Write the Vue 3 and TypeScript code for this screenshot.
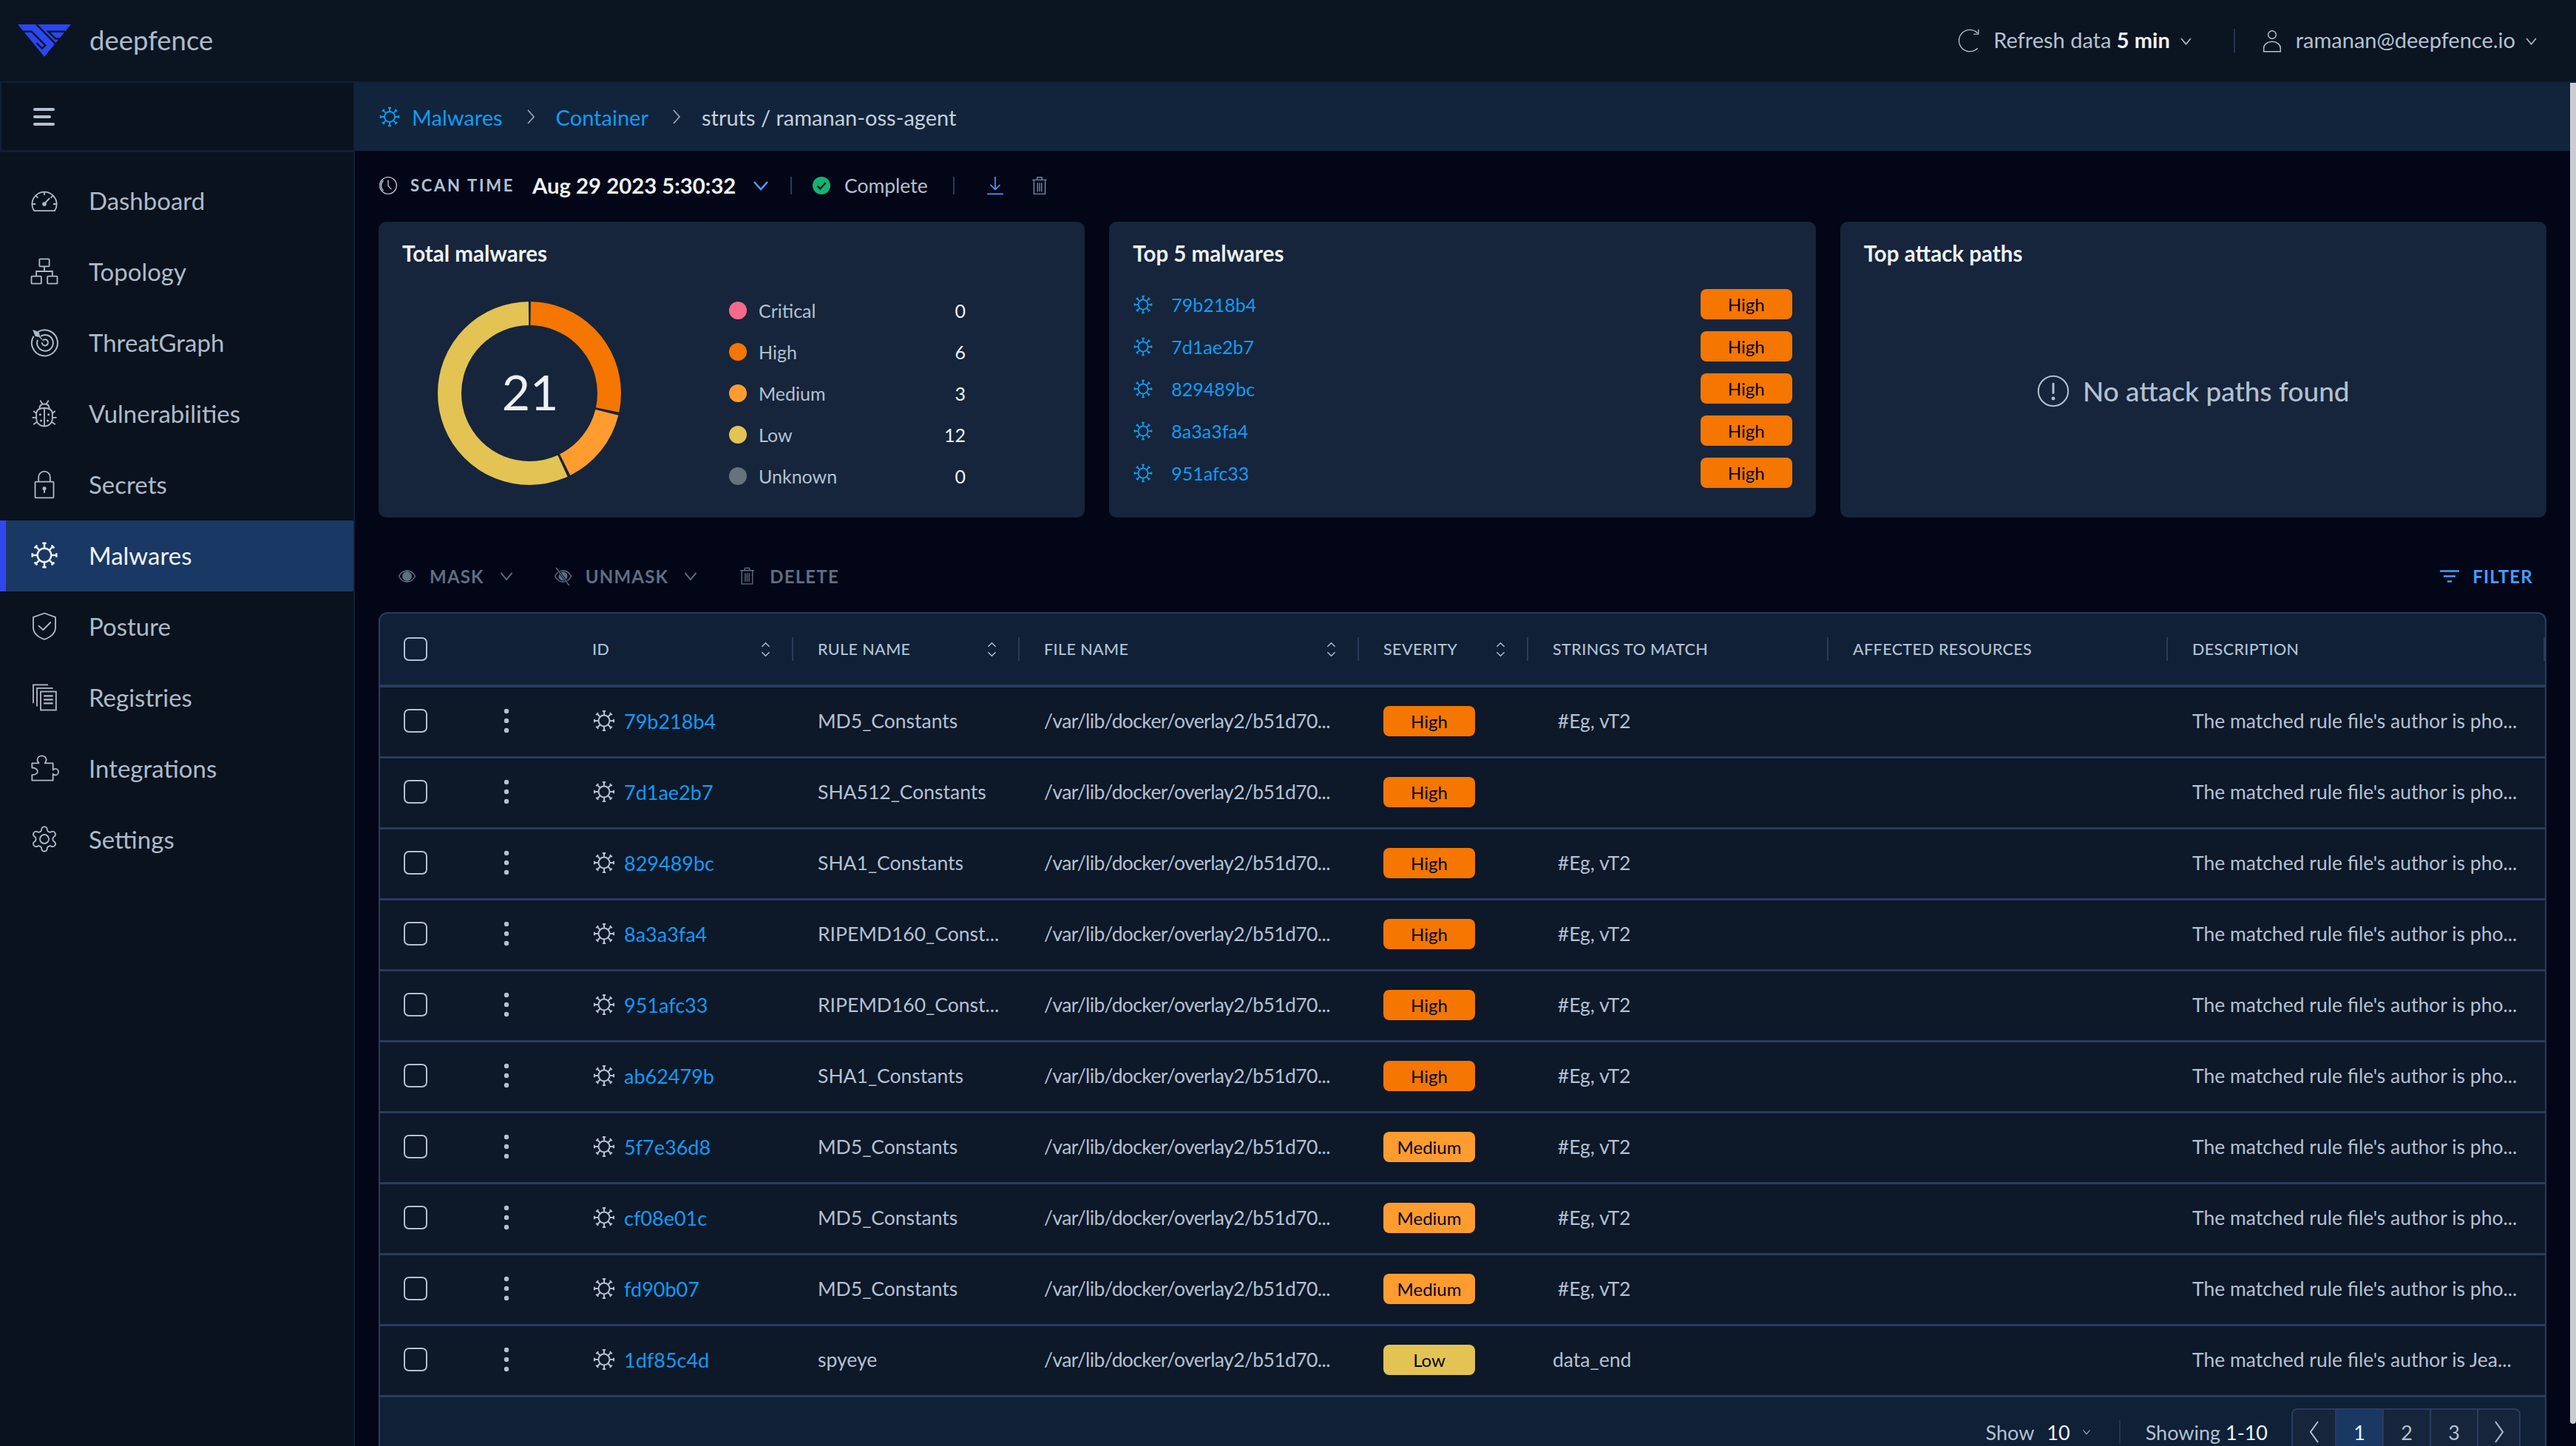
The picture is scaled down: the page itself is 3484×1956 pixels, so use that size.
<script setup lang="ts">
import { computed } from "vue";

type Severity = "Critical" | "High" | "Medium" | "Low" | "Unknown";

interface Row {
  id: string;
  rule: string;
  severity: Severity;
  strings: string;
  desc: string;
}

const navItems = [
  { label: "Dashboard", icon: "i-gauge" },
  { label: "Topology", icon: "i-topo" },
  { label: "ThreatGraph", icon: "i-target" },
  { label: "Vulnerabilities", icon: "i-bug" },
  { label: "Secrets", icon: "i-lock" },
  { label: "Malwares", icon: "i-virus" },
  { label: "Posture", icon: "i-shield" },
  { label: "Registries", icon: "i-docs" },
  { label: "Integrations", icon: "i-puzzle" },
  { label: "Settings", icon: "i-gear" },
];

const legend: { name: Severity; value: number; color: string }[] = [
  { name: "Critical", value: 0, color: "#f56a8a" },
  { name: "High", value: 6, color: "#f57600" },
  { name: "Medium", value: 3, color: "#ff9c30" },
  { name: "Low", value: 12, color: "#e3c353" },
  { name: "Unknown", value: 0, color: "#66737f" },
];

const top5 = ["79b218b4", "7d1ae2b7", "829489bc", "8a3a3fa4", "951afc33"];

const pho = "The matched rule file's author is pho...";
const rows: Row[] = [
  { id: "79b218b4", rule: "MD5_Constants", severity: "High", strings: " #Eg, vT2", desc: pho },
  { id: "7d1ae2b7", rule: "SHA512_Constants", severity: "High", strings: "", desc: pho },
  { id: "829489bc", rule: "SHA1_Constants", severity: "High", strings: " #Eg, vT2", desc: pho },
  { id: "8a3a3fa4", rule: "RIPEMD160_Const...", severity: "High", strings: " #Eg, vT2", desc: pho },
  { id: "951afc33", rule: "RIPEMD160_Const...", severity: "High", strings: " #Eg, vT2", desc: pho },
  { id: "ab62479b", rule: "SHA1_Constants", severity: "High", strings: " #Eg, vT2", desc: pho },
  { id: "5f7e36d8", rule: "MD5_Constants", severity: "Medium", strings: " #Eg, vT2", desc: pho },
  { id: "cf08e01c", rule: "MD5_Constants", severity: "Medium", strings: " #Eg, vT2", desc: pho },
  { id: "fd90b07", rule: "MD5_Constants", severity: "Medium", strings: " #Eg, vT2", desc: pho },
  { id: "1df85c4d", rule: "spyeye", severity: "Low", strings: "data_end", desc: "The matched rule file's author is Jea..." },
];

const columns = [
  { label: "ID", sort: true },
  { label: "Rule name", sort: true },
  { label: "File name", sort: true },
  { label: "Severity", sort: true },
  { label: "Strings to match", sort: false },
  { label: "Affected resources", sort: false },
  { label: "Description", sort: false },
];

const spokes = [0, 45, 90, 135, 180, 225, 270, 315];

const RADIUS = 108;
const GAP = 3.5;
const segments = computed(() => {
  const circumference = 2 * Math.PI * RADIUS;
  const total = legend.reduce((sum, item) => sum + item.value, 0);
  let start = 0;
  return legend
    .filter((item) => item.value > 0)
    .map((item) => {
      const len = (item.value / total) * circumference;
      const seg = {
        color: item.color,
        dash: `${len - GAP} ${circumference - len + GAP}`,
        offset: -(start + GAP / 2),
      };
      start += len;
      return seg;
    });
});
</script>

<template>
  <div class="app">
    <svg class="sprite" aria-hidden="true">
      <symbol id="i-virus" viewBox="0 0 24 24">
        <g fill="none" stroke="currentColor" stroke-width="1.5">
          <circle cx="12" cy="12" r="5.6" />
          <g v-for="deg in spokes" :key="deg" :transform="`rotate(${deg} 12 12)`">
            <path d="M12 6.4V2.2M10.4 2.2h3.2" />
          </g>
        </g>
      </symbol>
      <symbol id="i-gauge" viewBox="0 0 24 24">
        <g fill="none" stroke="currentColor" stroke-width="1.1" stroke-linecap="round" stroke-linejoin="round">
          <path d="M3.7 20.5C2.6 19 2 17.2 2 15.2a10 10 0 0 1 20 0c0 2-.6 3.800-1.700 5.300z" />
          <path d="M12 5.200v2.200M5 8.200l1.500 1.500M19 8.200l-1.500 1.500M2.200 15h2.200M21.800 15h-2.200M12.900 13.800l3.100-3.300" />
        </g>
        <circle cx="12" cy="15" r="1.700" fill="currentColor" />
      </symbol>
      <symbol id="i-topo" viewBox="0 0 24 24">
        <g fill="none" stroke="currentColor" stroke-width="1.1">
          <rect x="8" y="2" width="8" height="6" rx=".6" />
          <rect x="1.500" y="16" width="8" height="6" rx=".6" />
          <rect x="14.500" y="16" width="8" height="6" rx=".6" />
          <path d="M12 8v4M5.500 16v-4h13v4" />
        </g>
      </symbol>
      <symbol id="i-target" viewBox="0 0 24 24">
        <g fill="none" stroke="currentColor" stroke-width="1.2">
          <path d="M7 3.400A10.500 10.500 0 1 1 3.300 7" />
          <path d="M9 7.100A6.500 6.500 0 1 1 6.600 10" />
          <path d="M11 10.200a2.500 2.500 0 1 1-1 2" />
        </g>
        <path d="M12 12 7.800 7.800 4.500 7 2.500 1.800 7.500 3.600 8.400 6.900z" fill="currentColor" />
      </symbol>
      <symbol id="i-bug" viewBox="0 0 24 24">
        <g fill="none" stroke="currentColor" stroke-width="1.1" stroke-linecap="round">
          <path d="M5.500 12.500C5.500 9 8 7.800 12 7.800s6.500 1.200 6.500 4.700v3.500c0 4-3 6.500-6.500 6.500S5.500 20 5.500 16z" />
          <path d="M12 8v14M8 7.800c.2-2 1.800-3.300 4-3.300s3.800 1.300 4 3.300M8.800 2l1.800 2.700M15.200 2l-1.800 2.700" />
          <path d="M5.500 12 3.500 10.500M18.500 12l2-1.500M5.500 15.500h-3M18.500 15.500h3M6 19l-2.500 1.800M18 19l2.500 1.800" />
        </g>
        <g fill="currentColor">
          <circle cx="8.600" cy="13" r=".9" /><circle cx="15.400" cy="13" r=".9" />
          <circle cx="9.300" cy="18" r=".9" /><circle cx="14.700" cy="18" r=".9" />
        </g>
      </symbol>
      <symbol id="i-lock" viewBox="0 0 24 24">
        <g fill="none" stroke="currentColor" stroke-width="1.1">
          <rect x="4.500" y="10" width="15" height="13" rx=".6" />
          <path d="M7.300 10V6.300a4.700 4.700 0 0 1 9.400 0V10" />
        </g>
        <circle cx="12" cy="15.500" r="1.500" fill="currentColor" />
        <path d="M11.400 16h1.200v3h-1.200z" fill="currentColor" />
      </symbol>
      <symbol id="i-shield" viewBox="0 0 24 24">
        <g fill="none" stroke="currentColor" stroke-width="1.1" stroke-linejoin="round" stroke-linecap="round">
          <path d="M12 1.500 21 4.700v8.300c0 4.700-3.800 7.800-9 9.700-5.200-1.900-9-5-9-9.700V4.700z" />
          <path d="M7.500 11.800 11 15l6-6" />
        </g>
      </symbol>
      <symbol id="i-docs" viewBox="0 0 24 24">
        <g fill="none" stroke="currentColor" stroke-width="1.1">
          <path d="M3 17V2h12" />
          <path d="M6 19.500V4.700h13" />
          <rect x="9" y="7.500" width="12.500" height="15" />
          <path d="M11.500 11h7.500M11.500 14h7.500M11.500 17h7.500" stroke-width="1.300" />
        </g>
      </symbol>
      <symbol id="i-puzzle" viewBox="0 0 24 24">
        <path
          d="M2 8h5.500c-.8-1-1.200-1.700-1.200-2.700C6.300 3.300 8 2 10 2s3.600 1.400 3.600 3.300c0 1-.4 1.700-1.200 2.700H19v5.500c.8-.7 1.300-1 2-1 1.400 0 2.400 1.200 2.400 2.600S22.400 17.700 21 17.700c-.7 0-1.200-.3-2-1V22H2v-4.500c2.800 0 4.500-1.200 4.500-2.800S4.800 11.700 2 11.700z"
          fill="none"
          stroke="currentColor"
          stroke-width="1.100"
          stroke-linejoin="round"
        />
      </symbol>
      <symbol id="i-gear" viewBox="0 0 24 24">
        <g fill="none" stroke="currentColor" stroke-width="1.100">
          <path
            d="M12.220 2h-.44a2 2 0 0 0-2 2v.18a2 2 0 0 1-1 1.730l-.43.25a2 2 0 0 1-2 0l-.15-.08a2 2 0 0 0-2.730.73l-.22.38a2 2 0 0 0 .73 2.730l.15.1a2 2 0 0 1 1 1.720v.51a2 2 0 0 1-1 1.740l-.15.09a2 2 0 0 0-.73 2.730l.22.38a2 2 0 0 0 2.730.73l.15-.08a2 2 0 0 1 2 0l.43.25a2 2 0 0 1 1 1.730V20a2 2 0 0 0 2 2h.44a2 2 0 0 0 2-2v-.18a2 2 0 0 1 1-1.730l.43-.25a2 2 0 0 1 2 0l.15.08a2 2 0 0 0 2.730-.73l.22-.39a2 2 0 0 0-.73-2.730l-.15-.08a2 2 0 0 1-1-1.740v-.5a2 2 0 0 1 1-1.740l.15-.09a2 2 0 0 0 .73-2.730l-.22-.38a2 2 0 0 0-2.730-.73l-.15.08a2 2 0 0 1-2 0l-.43-.25a2 2 0 0 1-1-1.730V4a2 2 0 0 0-2-2z"
          />
          <circle cx="12" cy="12" r="3.600" />
        </g>
      </symbol>
      <symbol id="i-chev" viewBox="0 0 24 24">
        <path d="M3 7l9 11 9-11" fill="none" stroke="currentColor" stroke-width="2.200" />
      </symbol>
      <symbol id="i-trash" viewBox="0 0 24 24">
        <g fill="none" stroke="currentColor" stroke-width="1.300">
          <path d="M3 5h18M9 5V1.800h6V5M5 5v17.500h14V5M9.500 8.500v11M12 8.500v11M14.500 8.500v11" />
        </g>
      </symbol>
    </svg>

    <header class="topbar">
      <div class="brand">
        <svg class="logo" viewBox="12 12 216 132">
          <polygon points="12,12 228,12 120,143" fill="#2a47f0" />
          <g fill="none" stroke="#0b1421" stroke-width="7">
            <path d="M32 41H68L124 97 111 110 88 87" />
            <path d="M88 12 166 92" />
            <path d="M204 41H136L165 70H182" />
          </g>
        </svg>
        <span class="brand-name">deepfence</span>
      </div>
      <div class="top-actions">
        <svg class="top-icon" viewBox="0 0 24 24" fill="none" stroke="currentColor" stroke-width="1">
          <path d="M20 4.300A11 11 0 1 0 20 19.700" />
          <path d="M20.800 .5v4.800H16" />
        </svg>
        <span class="refresh">Refresh data <b>5 min</b></span>
        <svg class="mini-chev"><use href="#i-chev" /></svg>
        <span class="top-sep" />
        <svg class="top-icon user" viewBox="0 0 24 24" fill="none" stroke="currentColor" stroke-width="1.100">
          <circle cx="12" cy="6" r="4" />
          <path d="M3.500 23v-3.500a8.500 6.500 0 0 1 17 0V23z" />
        </svg>
        <span class="email">ramanan@deepfence.io</span>
        <svg class="mini-chev"><use href="#i-chev" /></svg>
      </div>
    </header>

    <div class="body">
      <aside class="sidebar">
        <div class="burger-row">
          <svg class="burger" viewBox="0 0 29 24">
            <g fill="#b3c1d1">
              <rect width="29" height="4" rx="2" />
              <rect y="10" width="24" height="4" rx="2" />
              <rect y="20" width="29" height="4" rx="2" />
            </g>
          </svg>
        </div>
        <nav class="nav">
          <a v-for="item in navItems" :key="item.label" class="nav-item" :class="{ active: item.label === 'Malwares' }">
            <svg class="nav-icon"><use :href="`#${item.icon}`" /></svg>
            <span>{{ item.label }}</span>
          </a>
        </nav>
      </aside>

      <div class="main-wrap">
        <main class="main">
          <div class="breadcrumb">
            <svg class="crumb-icon"><use href="#i-virus" /></svg>
            <a class="crumb-link">Malwares</a>
            <svg class="crumb-sep" viewBox="0 0 12 24"><path d="M2 3l8 9-8 9" fill="none" stroke="currentColor" stroke-width="1.800" /></svg>
            <a class="crumb-link">Container</a>
            <svg class="crumb-sep" viewBox="0 0 12 24"><path d="M2 3l8 9-8 9" fill="none" stroke="currentColor" stroke-width="1.800" /></svg>
            <span class="crumb-last">struts / ramanan-oss-agent</span>
          </div>

          <div class="content">
            <div class="scan-row">
              <svg class="clock" viewBox="0 0 24 24" fill="none" stroke="currentColor" stroke-width="1.300">
                <circle cx="12" cy="12" r="10.500" />
                <path d="M6 5.500A9 9 0 0 0 6 18.500" />
                <path d="M12 5v7.500l4 4" />
              </svg>
              <span class="scan-label">SCAN TIME</span>
              <span class="scan-date">Aug 29 2023 5:30:32</span>
              <svg class="scan-chev" viewBox="0 0 24 24"><path d="M3 7l9 10 9-10" fill="none" stroke="currentColor" stroke-width="2.600" /></svg>
              <span class="scan-sep" />
              <svg class="scan-check" viewBox="0 0 24 24">
                <circle cx="12" cy="12" r="12" fill="#15b371" />
                <path d="M6.500 12.500l3.800 3.800 7.500-8" fill="none" stroke="#0b1421" stroke-width="2.400" />
              </svg>
              <span class="scan-status">Complete</span>
              <span class="scan-sep second" />
              <svg class="scan-tool" viewBox="0 0 24 24" fill="none" stroke="#489cff" stroke-width="1.500">
                <path d="M12 1v15M6 11l6 6 6-6M2 22.500h20" />
              </svg>
              <svg class="scan-tool del"><use href="#i-trash" /></svg>
            </div>

            <section class="cards">
              <article class="card">
                <h3 class="card-title">Total malwares</h3>
                <div class="total-body">
                  <div class="donut">
                    <svg width="248" height="248" viewBox="0 0 248 248">
                      <circle
                        v-for="seg in segments"
                        :key="seg.color"
                        cx="124"
                        cy="124"
                        :r="RADIUS"
                        fill="none"
                        :stroke="seg.color"
                        stroke-width="32"
                        :stroke-dasharray="seg.dash"
                        :stroke-dashoffset="seg.offset"
                        transform="rotate(-90 124 124)"
                      />
                    </svg>
                    <div class="donut-center">21</div>
                  </div>
                  <ul class="legend">
                    <li v-for="item in legend" :key="item.name" class="legend-row">
                      <i class="dot" :style="{ background: item.color }" />
                      <span class="legend-name">{{ item.name }}</span>
                      <span class="legend-value">{{ item.value }}</span>
                    </li>
                  </ul>
                </div>
              </article>

              <article class="card">
                <h3 class="card-title">Top 5 malwares</h3>
                <ul class="top-list">
                  <li v-for="id in top5" :key="id" class="top-row">
                    <svg class="top-virus"><use href="#i-virus" /></svg>
                    <a class="link">{{ id }}</a>
                    <span class="badge high">High</span>
                  </li>
                </ul>
              </article>

              <article class="card">
                <h3 class="card-title">Top attack paths</h3>
                <div class="empty">
                  <svg class="empty-icon" viewBox="0 0 24 24" fill="none" stroke="currentColor" stroke-width="1.100">
                    <circle cx="12" cy="12" r="11" />
                    <path d="M12 6v8" stroke-width="1.600" />
                    <circle cx="12" cy="17.500" r=".8" fill="currentColor" />
                  </svg>
                  <span>No attack paths found</span>
                </div>
              </article>
            </section>

            <div class="actions">
              <button class="act">
                <svg class="act-icon" viewBox="0 0 24 24" fill="none" stroke="currentColor" stroke-width="1.400">
                  <path d="M1.500 12C4 7 7.500 4.800 12 4.800S20 7 22.500 12C20 17 16.500 19.200 12 19.200S4 17 1.500 12z" />
                  <circle cx="12" cy="12" r="5.500" fill="currentColor" />
                </svg>
                MASK
                <svg class="act-chev"><use href="#i-chev" /></svg>
              </button>
              <button class="act">
                <svg class="act-icon" viewBox="0 0 24 24" fill="none" stroke="currentColor" stroke-width="1.400">
                  <path d="M1.500 12C4 7 7.500 4.800 12 4.800S20 7 22.500 12C20 17 16.500 19.200 12 19.200S4 17 1.500 12z" />
                  <circle cx="12" cy="12" r="5" fill="currentColor" />
                  <path d="M3 1l17 23" stroke="#020617" stroke-width="3" />
                  <path d="M3 1l17 23" />
                </svg>
                UNMASK
                <svg class="act-chev"><use href="#i-chev" /></svg>
              </button>
              <button class="act">
                <svg class="act-icon trash"><use href="#i-trash" /></svg>
                DELETE
              </button>
              <button class="act filter">
                <svg class="act-icon" viewBox="0 0 26 24" fill="none" stroke="currentColor" stroke-width="2.400">
                  <path d="M0 5h26M5 12h16M10 19h6" />
                </svg>
                FILTER
              </button>
            </div>

            <div class="table-box">
              <table class="grid">
                <colgroup>
                  <col class="c-check" />
                  <col class="c-menu" />
                  <col class="c-id" />
                  <col class="c-rule" />
                  <col class="c-file" />
                  <col class="c-sev" />
                  <col class="c-str" />
                  <col class="c-aff" />
                  <col class="c-desc" />
                </colgroup>
                <thead>
                  <tr>
                    <th class="cell-check"><span class="checkbox" /></th>
                    <th />
                    <th v-for="col in columns" :key="col.label">
                      <div class="th-inner" :class="{ idcol: col.label === 'ID' }">
                        <span>{{ col.label }}</span>
                        <svg v-if="col.sort" class="sort" viewBox="0 0 14 22" fill="none" stroke="currentColor" stroke-width="1.500">
                          <path d="M1.500 7 7 1.500 12.500 7M1.500 15 7 20.500 12.500 15" />
                        </svg>
                      </div>
                    </th>
                  </tr>
                </thead>
                <tbody>
                  <tr v-for="row in rows" :key="row.id">
                    <td class="cell-check"><span class="checkbox" /></td>
                    <td class="cell-menu">
                      <svg class="kebab" viewBox="0 0 8 34" fill="#b3c1d1">
                        <circle cx="4" cy="4" r="3.200" /><circle cx="4" cy="17" r="3.200" /><circle cx="4" cy="30" r="3.200" />
                      </svg>
                    </td>
                    <td class="cell-id">
                      <div class="id-wrap">
                        <svg class="row-virus"><use href="#i-virus" /></svg>
                        <a class="link">{{ row.id }}</a>
                      </div>
                    </td>
                    <td class="cell">{{ row.rule }}</td>
                    <td class="cell path">/var/lib/docker/overlay2/b51d70...</td>
                    <td class="cell">
                      <span class="badge" :class="row.severity.toLowerCase()">{{ row.severity }}</span>
                    </td>
                    <td class="cell strings">{{ row.strings }}</td>
                    <td class="cell" />
                    <td class="cell">{{ row.desc }}</td>
                  </tr>
                </tbody>
              </table>
              <div class="foot">
                <span class="foot-label">Show</span>
                <span class="foot-num">10</span>
                <svg class="foot-chev"><use href="#i-chev" /></svg>
                <span class="foot-sep" />
                <span class="foot-label">Showing <b>1-10</b></span>
                <div class="pager">
                  <span class="page arrow">
                    <svg viewBox="0 0 14 32"><path d="M12 2 2 16l10 14" fill="none" stroke="currentColor" stroke-width="2" /></svg>
                  </span>
                  <span class="page current">1</span>
                  <span class="page">2</span>
                  <span class="page">3</span>
                  <span class="page arrow">
                    <svg viewBox="0 0 14 32"><path d="M2 2l10 14L2 30" fill="none" stroke="currentColor" stroke-width="2" /></svg>
                  </span>
                </div>
              </div>
            </div>
          </div>
        </main>
        <div class="scrollbar"><div class="thumb" /></div>
      </div>
    </div>
  </div>
</template>

<style>
html,
body {
  margin: 0;
  background: #020617;
  overflow: hidden;
}
</style>

<style scoped>
.app {
  height: 100vh;
  display: flex;
  flex-direction: column;
  overflow: hidden;
  background: #020617;
  color: #b3c1d1;
  font-family: Lato, "Noto Sans", sans-serif;
}

.sprite {
  position: absolute;
  width: 0;
  height: 0;
}

.topbar {
  height: 110px;
  flex: none;
  display: flex;
  align-items: center;
  justify-content: space-between;
  padding: 0 52px 0 24px;
  background: #0b1421;
}

.brand {
  display: flex;
  align-items: center;
  gap: 25px;
}

.logo {
  width: 72px;
  height: 44px;
}

.brand-name {
  padding-bottom: 3px;
  font-size: 36.500px;
  color: #adbbc9;
}

.top-actions {
  display: flex;
  align-items: center;
  font-size: 29px;
}

.top-actions > span:not(.top-sep) {
  padding-bottom: 3px;
}

.top-icon {
  width: 32px;
  height: 32px;
  margin-right: 16px;
}

.refresh b {
  color: #eef2f6;
  font-weight: 700;
}

.mini-chev {
  width: 17px;
  height: 17px;
  margin-left: 13px;
}

.top-sep {
  width: 2px;
  height: 32px;
  margin: 0 34px 0 56px;
  background: #24344e;
}

.email {
  color: #b3c1d1;
}

.body {
  flex: 1;
  min-height: 0;
  display: flex;
  border-top: 2px solid #0f2038;
}

.sidebar {
  width: 478px;
  flex: none;
  background: #0a121d;
  border-right: 2px solid #0f2038;
}

.burger-row {
  height: 94px;
  box-sizing: border-box;
  display: flex;
  align-items: center;
  padding-left: 43px;
  border-bottom: 3px solid #0f2038;
  border-left: 2px solid #0f2038;
}

.burger {
  width: 29px;
  height: 24px;
}

.nav {
  padding-top: 18px;
}

.nav-item {
  height: 96px;
  box-sizing: border-box;
  display: flex;
  align-items: center;
  gap: 40px;
  padding: 0 0 3px 40px;
  font-size: 33px;
  color: #adbbc9;
}

.nav-item.active {
  padding-left: 32px;
  border-left: 8px solid #3147ee;
  background: #1a3864;
  color: #eef2f6;
}

.nav-icon {
  width: 40px;
  height: 40px;
}

.main-wrap {
  flex: 1;
  min-width: 0;
  display: flex;
}

.main {
  flex: 1;
  min-width: 0;
}

.scrollbar {
  width: 8px;
  flex: none;
}

.thumb {
  height: 1814px;
  border-radius: 0 0 4px 4px;
  background: #c9cdd3;
}

.breadcrumb {
  height: 92px;
  display: flex;
  align-items: center;
  padding-left: 32px;
  background: #12243b;
  font-size: 29px;
}

.crumb-icon {
  width: 30px;
  height: 30px;
  margin-right: 15px;
  color: #0e9cf5;
}

.crumb-link {
  color: #0e9cf5;
}

.crumb-sep {
  width: 12px;
  height: 24px;
  margin: 0 28px 0 32px;
  color: #94a3b4;
}

.crumb-last {
  color: #c5d0dc;
}

.content {
  padding: 0 32px;
}

.scan-row {
  height: 96px;
  box-sizing: border-box;
  padding-bottom: 3px;
  display: flex;
  align-items: center;
  font-size: 29.300px;
}

.clock {
  width: 26px;
  height: 26px;
  margin-right: 17px;
}

.scan-label {
  width: 165px;
  font-size: 22px;
  font-weight: 700;
  letter-spacing: 2.700px;
}

.scan-date {
  width: 297px;
  font-weight: 700;
  color: #eef2f6;
}

.scan-chev {
  width: 24px;
  height: 24px;
  color: #489cff;
}

.scan-sep {
  width: 2px;
  height: 24px;
  margin: 0 28px;
  background: #2a3b57;
}

.scan-sep.second {
  margin: 0 42px 0 34px;
}

.scan-check {
  width: 24px;
  height: 24px;
  margin-right: 19px;
}

.scan-status {
  font-size: 26.500px;
}

.scan-tool {
  width: 26px;
  height: 28px;
  margin-right: 34px;
}

.scan-tool.del {
  color: #6d8cb0;
}

.cards {
  display: grid;
  grid-template-columns: repeat(3, 1fr);
  gap: 33px;
}

.card {
  height: 400px;
  box-sizing: border-box;
  padding: 25px 32px;
  border-radius: 10px;
  background: #16253b;
}

.card-title {
  margin: 0;
  font-size: 29.500px;
  line-height: 36px;
  font-weight: 700;
  color: #eef2f6;
}

.total-body {
  display: flex;
  align-items: flex-start;
  margin: 47px 0 0 48px;
}

.donut {
  position: relative;
  width: 248px;
  height: 248px;
}

.donut-center {
  position: absolute;
  inset: 0;
  display: flex;
  align-items: center;
  justify-content: center;
  padding: 0 0 5px 2px;
  font-size: 66px;
  color: #eef2f6;
}

.legend {
  width: 320px;
  margin: -16px 0 0 146px;
  padding: 0;
  list-style: none;
}

.legend-row {
  height: 56px;
  display: flex;
  align-items: center;
  font-size: 25px;
}

.dot {
  width: 24px;
  height: 24px;
  margin-right: 16px;
  border-radius: 50%;
}

.legend-name {
  flex: 1;
}

.legend-value {
  color: #eef2f6;
}

.top-list {
  margin: 22px 0 0;
  padding: 0;
  list-style: none;
}

.top-row {
  height: 57px;
  display: flex;
  align-items: center;
  font-size: 25px;
}

.top-virus {
  width: 28px;
  height: 28px;
  margin-right: 24px;
  color: #0e9cf5;
}

.link {
  color: #0e9cf5;
}

.top-row .badge {
  margin-left: auto;
}

.badge {
  display: flex;
  align-items: center;
  justify-content: center;
  width: 124px;
  height: 41px;
  border-radius: 8px;
  font-size: 24px;
  color: #020617;
}

.badge.high {
  background: #f57600;
}

.badge.medium {
  background: #ff9c30;
}

.badge.low {
  background: #e3c353;
}

.empty {
  display: flex;
  align-items: center;
  justify-content: center;
  gap: 18px;
  margin-top: 145px;
  font-size: 37px;
  font-weight: 500;
  color: #b3c1d1;
}

.empty-icon {
  width: 44px;
  height: 44px;
}

.actions {
  height: 98px;
  margin-top: 30px;
  display: flex;
  align-items: center;
  padding: 0 18px 0 26px;
  gap: 54px;
}

.act {
  display: flex;
  align-items: center;
  gap: 18px;
  padding: 0;
  border: 0;
  background: none;
  font: inherit;
  font-size: 24px;
  font-weight: 700;
  letter-spacing: 1.200px;
  color: #5f6f82;
}

.act-icon {
  width: 25px;
  height: 25px;
}

.act-icon.trash {
  height: 28px;
}

.act-chev {
  width: 20px;
  height: 20px;
  margin-left: 2px;
}

.act.filter {
  margin-left: auto;
  color: #489cff;
}

.act.filter .act-icon {
  width: 26px;
}

.table-box {
  border: 2px solid #2a3b60;
  border-bottom: 0;
  border-radius: 12px 12px 0 0;
  background: #0f2037;
}

.grid {
  width: 100%;
  table-layout: fixed;
  border-collapse: separate;
  border-spacing: 0;
  font-size: 26.500px;
}

.c-check {
  width: 120px;
}

.c-menu {
  width: 135px;
}

.c-id {
  width: 304px;
}

.c-rule {
  width: 306px;
}

.c-file {
  width: 459px;
}

.c-sev {
  width: 229px;
}

.c-str {
  width: 406px;
}

.c-aff {
  width: 459px;
}

th {
  height: 96px;
  padding: 0;
  border-bottom: 4px solid #2a3b60;
  font-size: 21.500px;
  font-weight: 500;
  text-align: left;
  text-transform: uppercase;
  letter-spacing: .4px;
}

.th-inner {
  height: 32px;
  display: flex;
  align-items: center;
  justify-content: space-between;
  padding: 0 29px 0 33px;
  border-right: 2px solid #2a3b57;
  color: #b3c1d1;
}

.th-inner.idcol {
  padding-left: 32px;
}

.sort {
  width: 13px;
  height: 21px;
}

td {
  height: 90px;
  padding: 0 0 3px;
  border-bottom: 3px solid #2a3b60;
  background: #0d1829;
  white-space: nowrap;
  overflow: hidden;
}

.cell-check {
  padding-left: 32px;
}

.checkbox {
  display: block;
  width: 32px;
  height: 32px;
  box-sizing: border-box;
  border: 2px solid #b3c1d1;
  border-radius: 7px;
}

.cell-menu {
  padding-left: 47px;
}

.kebab {
  display: block;
  width: 8px;
  height: 34px;
}

.cell-id {
  padding-left: 32px;
}

.id-wrap {
  display: flex;
  align-items: center;
  gap: 11px;
  font-size: 27px;
}

.row-virus {
  width: 32px;
  height: 32px;
  color: #b3c1d1;
}

.cell {
  padding-left: 33px;
}

.path {
  letter-spacing: -.6px;
}

.strings {
  white-space: pre;
}

.foot {
  height: 94px;
  display: flex;
  align-items: center;
  justify-content: flex-end;
  padding-right: 33px;
  font-size: 27px;
}

.foot-label b {
  font-weight: 400;
  color: #eef2f6;
}

.foot-num {
  margin-left: 17px;
  color: #eef2f6;
}

.foot-chev {
  width: 12px;
  height: 12px;
  margin-left: 16px;
}

.foot-sep {
  width: 2px;
  height: 32px;
  margin: 0 34px 0 38px;
  background: #24344e;
}

.pager {
  display: flex;
  height: 60px;
  margin-left: 32px;
  border: 2px solid #2a3b60;
  border-radius: 8px;
  background: #16253b;
}

.page {
  width: 64px;
  box-sizing: border-box;
  display: flex;
  align-items: center;
  justify-content: center;
  border-left: 2px solid #2a3b60;
}

.page:first-child {
  border-left: 0;
}

.page.arrow {
  width: 57px;
}

.page.arrow svg {
  width: 14px;
  height: 32px;
}

.page.current {
  background: #1a3864;
  color: #eef2f6;
}
</style>
